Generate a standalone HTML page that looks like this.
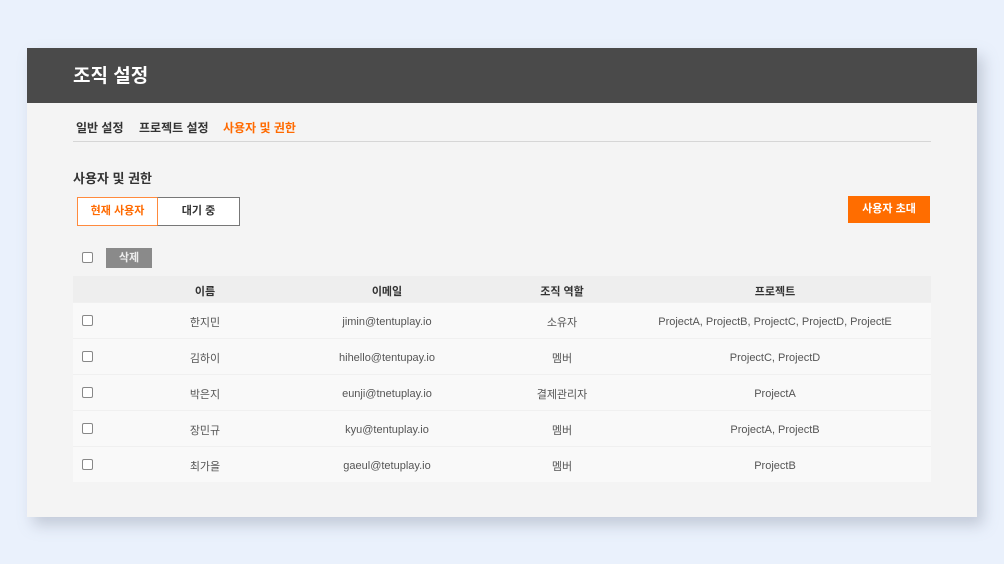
<!DOCTYPE html>
<html><head><meta charset="utf-8"><style>
*{margin:0;padding:0;box-sizing:border-box}
body{width:1004px;height:564px;background:#eaf1fc;font-family:"Liberation Sans","Noto Sans CJK KR",sans-serif;position:relative;overflow:hidden}
.card{position:absolute;left:27px;top:48px;width:950px;height:469px;background:#f4f4f4;box-shadow:6px 8px 14px rgba(120,130,150,.35)}
.hd{height:55px;background:#4a4a4a;color:#fff;font-size:19px;font-weight:bold;padding-left:46px;line-height:58px}
.abs{position:absolute}
.tab{font-size:12px;font-weight:bold;color:#333;top:71px}
.cb{position:absolute;width:11px;height:11px;border:1px solid #888;border-radius:2px;background:#fff}
.row{position:absolute;left:46px;width:858px;height:36px;background:#f9f9f9;border-top:1px solid #f0f0f0;font-size:11px;color:#555}
.row span,.th span{position:absolute;transform:translateX(-50%);top:2px;height:34px;white-space:nowrap;display:flex;align-items:center}
.th{position:absolute;left:46px;top:228px;width:858px;height:26px;background:#eeeeee;font-size:11px;font-weight:bold;color:#333}
.th span{height:26px}
</style></head><body>
<div class="card">
<div class="hd">조직 설정</div>
<div class="abs tab" style="left:49px">일반 설정</div>
<div class="abs tab" style="left:112px">프로젝트 설정</div>
<div class="abs tab" style="left:196px;color:#ff6a00">사용자 및 권한</div>
<div class="abs" style="left:46px;top:93px;width:858px;height:1px;background:#d6d6d6"></div>
<div class="abs" style="left:46px;top:120px;font-size:13px;font-weight:bold;color:#333">사용자 및 권한</div>
<div class="abs" style="left:50px;top:149px;width:81px;height:29px;border:1px solid #ff8a3d;background:#fff;color:#ff6a00;font-size:11px;font-weight:bold;text-align:center;line-height:27px">현재 사용자</div>
<div class="abs" style="left:130px;top:149px;width:83px;height:29px;border:1px solid #777;border-left:1px solid #ff8a3d;background:#fff;color:#333;font-size:11px;font-weight:bold;text-align:center;line-height:27px">대기 중</div>
<div class="abs" style="left:821px;top:148px;width:82px;height:27px;background:#ff6d00;color:#fff;font-size:11px;font-weight:bold;text-align:center;line-height:27px">사용자 초대</div>
<div class="cb" style="left:55px;top:204px"></div>
<div class="abs" style="left:79px;top:200px;width:46px;height:20px;background:#8a8a8a;color:#eee;font-size:11px;font-weight:bold;text-align:center;line-height:20px">삭제</div>
<div class="th"><span style="left:132px">이름</span><span style="left:314px">이메일</span><span style="left:489px">조직 역할</span><span style="left:702px">프로젝트</span></div>
<div class="row" style="top:254px"><div class="cb" style="left:9px;top:12px"></div><span style="left:132px">한지민</span><span style="left:314px">jimin@tentuplay.io</span><span style="left:489px">소유자</span><span style="left:702px">ProjectA, ProjectB, ProjectC, ProjectD, ProjectE</span></div>
<div class="row" style="top:290px"><div class="cb" style="left:9px;top:12px"></div><span style="left:132px">김하이</span><span style="left:314px">hihello@tentupay.io</span><span style="left:489px">멤버</span><span style="left:702px">ProjectC, ProjectD</span></div>
<div class="row" style="top:326px"><div class="cb" style="left:9px;top:12px"></div><span style="left:132px">박은지</span><span style="left:314px">eunji@tnetuplay.io</span><span style="left:489px">결제관리자</span><span style="left:702px">ProjectA</span></div>
<div class="row" style="top:362px"><div class="cb" style="left:9px;top:12px"></div><span style="left:132px">장민규</span><span style="left:314px">kyu@tentuplay.io</span><span style="left:489px">멤버</span><span style="left:702px">ProjectA, ProjectB</span></div>
<div class="row" style="top:398px"><div class="cb" style="left:9px;top:12px"></div><span style="left:132px">최가을</span><span style="left:314px">gaeul@tetuplay.io</span><span style="left:489px">멤버</span><span style="left:702px">ProjectB</span></div>
</div>
</body></html>
